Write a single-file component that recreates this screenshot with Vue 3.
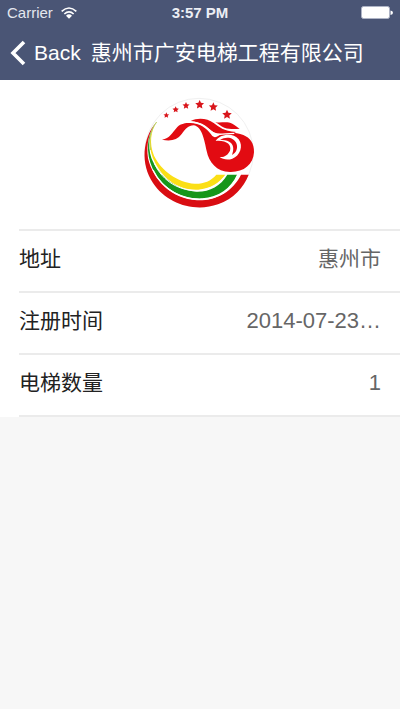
<script setup>
const company = '惠州市广安电梯工程有限公司'
const rows = [
  { label: '地址', value: '惠州市' },
  { label: '注册时间', value: '2014-07-23…', numeric: true },
  { label: '电梯数量', value: '1', numeric: true },
]
const stars = [
  { x: 94, y: 76, r: 9 },
  { x: 122, y: 59, r: 10 },
  { x: 153, y: 47, r: 11 },
  { x: 194, y: 44, r: 14 },
  { x: 235, y: 51, r: 14 },
  { x: 276, y: 74, r: 15 },
]
function starPoints({ x, y, r }) {
  return Array.from({ length: 10 }, (_, i) => {
    const radius = i % 2 ? r * 0.48 : r
    const a = (Math.PI / 5) * i - Math.PI / 2
    return `${(x + radius * Math.cos(a)).toFixed(1)},${(y + radius * Math.sin(a)).toFixed(1)}`
  }).join(' ')
}
</script>

<template>
  <div class="screen">
    <header class="top">
      <div class="status">
        <div class="carrier">
          <span>Carrier</span>
          <svg class="wifi" viewBox="0 0 48 36" aria-hidden="true">
            <g fill="none" stroke="#fff" stroke-width="5">
              <path d="M2 13Q24 -7 46 13" />
              <path d="M10 21Q24 8 38 21" />
            </g>
            <path d="M15 26Q24 18 33 26L24 35Z" fill="#fff" />
          </svg>
        </div>
        <span class="time">3:57 PM</span>
        <svg class="battery" viewBox="0 0 32 14" aria-hidden="true">
          <rect x="0.5" y="0.5" width="28" height="12" rx="2" fill="#fff" stroke="#aeb4c6" />
          <path d="M29.5 4.5Q32 5 32 6.7T29.5 9Z" fill="#fff" />
        </svg>
      </div>
      <nav class="nav">
        <button class="back" type="button">
          <svg class="chevron" viewBox="0 0 16 26" aria-hidden="true">
            <path d="M14 2L3 13L14 24" fill="none" stroke="#fff" stroke-width="3.6" />
          </svg>
          <span>Back</span>
        </button>
        <h1 class="title">{{ company }}</h1>
      </nav>
    </header>

    <main class="panel">
      <div class="brand">
        <svg class="logo" viewBox="0 0 390 375" role="img" :aria-label="company">
          <circle cx="192" cy="188" r="163" fill="#fff" stroke="#f0f0f0" stroke-width="3" />
          <path fill="#d90d12" d="M64 96C22 145 16 222 54 279C94 341 179 368 249 343C296 326 326 292 341 254H318C294 304 243 333 186 331C111 328 54 270 39 205C33 163 42 125 64 96Z" />
          <path fill="#16961a" d="M64 96C35 135 31 188 53 236C83 298 144 328 202 325C251 321 287 295 306 254H277C256 289 224 306 184 305C124 300 70 258 49 204C37 166 42 130 64 96Z" />
          <path fill="#fbdf16" d="M65 96C40 130 38 177 61 220C89 274 138 302 190 299C226 295 252 280 271 254H244C227 274 204 282 179 281C127 277 80 243 57 197C42 160 47 124 65 96Z" />
          <path fill="none" stroke="#b9cf5a" stroke-width="3" d="M65 96C46 121 41 148 47 180" />
          <path fill="none" stroke="#fff" stroke-width="3" d="M58 220C83 276 137 304 190 302C229 298 255 281 273 254" />
          <path fill="none" stroke="#fff" stroke-width="4" d="M54 240C83 300 143 331 202 328C254 324 290 297 309 254" />
          <g fill="#d9151b">
            <polygon v-for="star in stars" :key="star.x" :points="starPoints(star)" />
          </g>
          <g fill="#e20b12">
            <path d="M81 149C105 145 111 129 127 111C141 97 160 99 176 99C204 105 221 122 232 138C242 147 250 136 264 130C283 125 307 128 325 135C345 143 358 160 357 187C355 224 326 247 285 246C244 245 222 217 215 183C208 148 200 109 176 106C160 106 151 118 140 132C126 151 106 154 81 149Z" />
            <path d="M167 93C190 82 218 86 236 99C253 111 265 123 303 126L292 132C268 132 245 136 230 123C214 109 198 97 167 93Z" />
            <path d="M241 97C261 99 278 94 292 101C301 105 306 112 314 116C299 118 283 118 268 113C257 109 251 102 241 97Z" />
          </g>
          <path fill="none" stroke="#fff" stroke-width="4" d="M160 97C194 95 211 107 226 122C244 139 260 131 298 130" />
          <path fill="#fff" d="M242 153C256 131 294 127 311 148C326 168 315 198 292 206C277 212 262 207 254 201C270 202 279 194 285 182C291 164 273 150 242 153Z" />
          <path fill="#e20b12" d="M255 150C274 138 297 143 304 160C310 175 303 189 291 195C296 181 297 168 288 159C280 151 270 149 255 150Z" />
        </svg>
      </div>
      <dl class="details">
        <div v-for="row in rows" :key="row.label" class="row">
          <dt>{{ row.label }}</dt>
          <dd :class="{ numeric: row.numeric }">{{ row.value }}</dd>
        </div>
      </dl>
    </main>
  </div>
</template>

<style>
body {
  background: #f7f7f7;
}
</style>

<style scoped>
.screen {
  font-family: "Liberation Sans", "Noto Sans CJK SC", sans-serif;
  color: #222;
}
.top {
  height: 80px;
  box-sizing: border-box;
  background: #4a5575;
  color: #fff;
}
.status {
  display: grid;
  grid-template-columns: 1fr auto 1fr;
  align-items: center;
  height: 26px;
  padding: 0 7px;
  font-size: 15px;
  line-height: 26px;
}
.carrier {
  display: flex;
  align-items: center;
  gap: 8px;
  color: #e4e7ef;
}
.wifi {
  width: 16px;
  height: 12px;
}
.time {
  font-weight: bold;
  color: #eceef4;
}
.battery {
  width: 32px;
  height: 14px;
  justify-self: end;
}
.nav {
  display: flex;
  align-items: center;
  height: 54px;
  padding: 0 10px;
  gap: 10px;
}
.back {
  display: flex;
  align-items: center;
  gap: 8px;
  padding: 0;
  border: 0;
  background: none;
  color: inherit;
  font: inherit;
  font-size: 21px;
  line-height: 32px;
}
.chevron {
  width: 16px;
  height: 26px;
}
.title {
  margin: 0;
  font-size: 21px;
  font-weight: 400;
  line-height: 32px;
  white-space: nowrap;
}
.panel {
  background: #fff;
}
.brand {
  display: flex;
  justify-content: center;
  padding: 10px 0 14px;
}
.logo {
  width: 130px;
  height: 125px;
}
.details {
  margin: 0;
  padding-left: 19px;
}
.row {
  display: flex;
  align-items: center;
  justify-content: space-between;
  box-sizing: border-box;
  height: 62px;
  padding: 0 19px 5px 0;
  border-top: 2px solid #ebebeb;
  font-size: 21px;
  line-height: 32px;
}
.row:last-child {
  height: 64px;
  border-bottom: 2px solid #ebebeb;
}
dd {
  margin: 0;
  color: #666;
}
.numeric {
  font-size: 22px;
}
</style>
